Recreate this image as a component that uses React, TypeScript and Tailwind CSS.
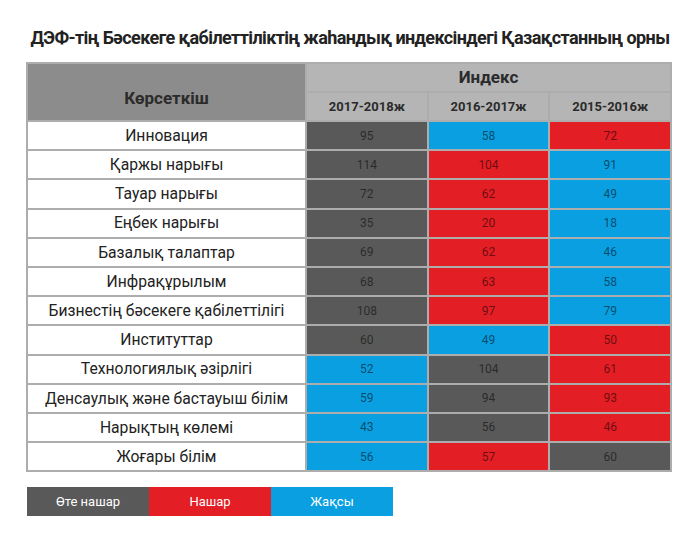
const rows: [string, number, number, number, string, string, string][] = [
  ["Инновация", 95, 58, 72, "g", "b", "r"],
  ["Қаржы нарығы", 114, 104, 91, "g", "r", "b"],
  ["Тауар нарығы", 72, 62, 49, "g", "r", "b"],
  ["Еңбек нарығы", 35, 20, 18, "g", "r", "b"],
  ["Базалық талаптар", 69, 62, 46, "g", "r", "b"],
  ["Инфрақұрылым", 68, 63, 58, "g", "r", "b"],
  ["Бизнестің бәсекеге қабілеттілігі", 108, 97, 79, "g", "r", "b"],
  ["Институттар", 60, 49, 50, "g", "b", "r"],
  ["Технологиялық әзірлігі", 52, 104, 61, "b", "g", "r"],
  ["Денсаулық және бастауыш білім", 59, 94, 93, "b", "g", "r"],
  ["Нарықтың көлемі", 43, 56, 46, "b", "g", "r"],
  ["Жоғары білім", 56, 57, 60, "b", "r", "g"],
];

const cellBg: Record<string, string> = {
  g: "bg-[#595959]",
  r: "bg-[#e31e24]",
  b: "bg-[#0a9fe0]",
};

export default function App() {
  return (
    <div className="w-[700px] h-[548px] bg-white font-['Roboto',sans-serif] text-[#222]">
      {/* Title */}
      <h1 className="pt-[27px] text-center text-[18px] font-bold tracking-[-0.6px] leading-[22px] text-[#222]">
        ДЭФ-тің Бәсекеге қабілеттіліктің жаһандық индексіндегі Қазақстанның орны
      </h1>

      {/* Table */}
      <div className="ml-[26px] mt-[13px] w-[646px] bg-[#adadad] p-[2px]">
        <div className="grid grid-cols-[277px_1fr_1fr_1fr] gap-[2px]">
          <div className="row-span-2 flex items-end justify-center pb-[9px] bg-[#8c8c8c] text-[17px] font-bold text-[#2b2b2b]">
            Көрсеткіш
          </div>
          <div className="col-span-3 flex h-[27px] items-center justify-center bg-[#b5b5b5] text-[17px] font-bold text-[#2b2b2b]">
            Индекс
          </div>
          {["2017-2018ж", "2016-2017ж", "2015-2016ж"].map((y) => (
            <div key={y} className="flex h-[27px] items-center justify-center bg-[#b5b5b5] text-[13px] font-bold text-[#2b2b2b]">
              {y}
            </div>
          ))}
          {rows.map((r) => (
            <>
              <div key={r[0]} className="flex h-[27.2px] items-center justify-center bg-white text-[15.7px] text-[#222]">
                {r[0]}
              </div>
              {[1, 2, 3].map((i) => (
                <div
                  key={r[0] + i}
                  className={`flex h-[27.2px] items-center justify-center text-[12px] text-black/55 ${cellBg[r[i + 3] as string]}`}
                >
                  {r[i]}
                </div>
              ))}
            </>
          ))}
        </div>
      </div>

      {/* Legend */}
      <div className="ml-[27px] mt-[15px] flex h-[29px] w-[366px] text-[13px] text-white">
        <div className="flex flex-1 items-center justify-center bg-[#595959]">Өте нашар</div>
        <div className="flex flex-1 items-center justify-center bg-[#e31e24]">Нашар</div>
        <div className="flex flex-1 items-center justify-center bg-[#0a9fe0]">Жақсы</div>
      </div>
    </div>
  );
}
